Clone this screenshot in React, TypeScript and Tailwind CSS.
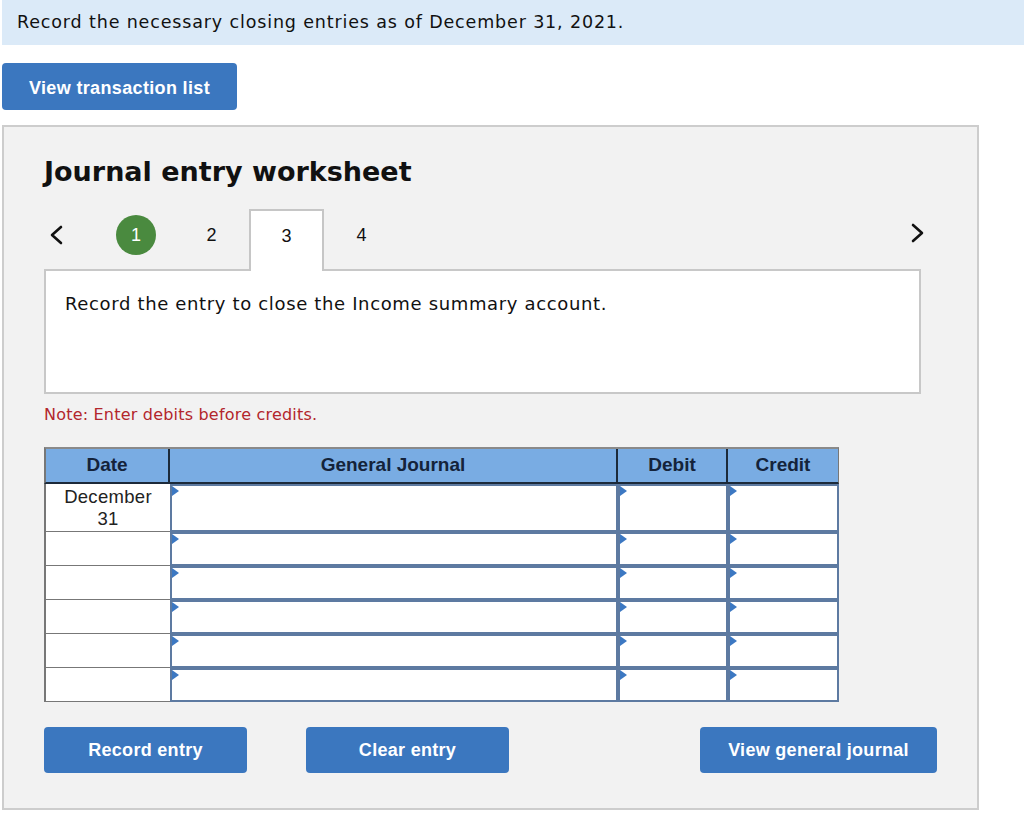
const rows = [48, 34, 34, 34, 34, 34];

function Chevron({ dir }: { dir: "left" | "right" }) {
  return (
    <svg width="16" height="22" viewBox="0 0 16 22" fill="none">
      <polyline
        points={dir === "left" ? "13,3 4,11 13,19" : "3,3 12,11 3,19"}
        stroke="#111"
        strokeWidth="2.6"
        strokeLinecap="round"
        strokeLinejoin="round"
      />
    </svg>
  );
}

function InputCell({ width }: { width: string }) {
  return (
    <div className={`${width} relative h-full border-2 border-[#5d7aa1] bg-white`}>
      <span className="absolute left-0 top-0 h-0 w-0 border-y-[5px] border-l-[7px] border-y-transparent border-l-[#3c78c2]" />
    </div>
  );
}

export default function App() {
  return (
    <div className="h-[824px] w-[1024px] overflow-hidden bg-white font-['DejaVu_Sans',sans-serif] text-[#111]">
      <div className="ml-[2px] flex h-[45px] items-center bg-[#dbeaf8] px-[15px] text-[17.5px] tracking-[0.85px]">
        Record the necessary closing entries as of December 31, 2021.
      </div>

      <button className="ml-[2px] mt-[18px] flex h-[47px] w-[235px] items-center justify-center rounded-[4px] bg-[#3b77bf] pt-[3px] font-['Liberation_Sans',sans-serif] text-[18px] font-bold tracking-[0.35px] text-white">
        View transaction list
      </button>

      <div className="ml-[2px] mt-[15px] box-border h-[685px] w-[977px] border-2 border-[#cdcdcd] bg-[#f2f2f2] pl-[40px]">
        <h1 className="mt-[30px] text-[27px] font-bold leading-[30px]">Journal entry worksheet</h1>

        <div className="mt-[22px] flex h-[60px] w-[893px] items-start font-['Liberation_Sans',sans-serif] text-[18px]">
          <div className="flex h-[52px] w-[54px] items-center pl-[4px]">
            <Chevron dir="left" />
          </div>
          <div className="flex w-[76px] justify-center pt-[6px]">
            <div className="flex h-[40px] w-[40px] items-center justify-center rounded-full bg-[#4a8a3f] text-white">1</div>
          </div>
          <div className="flex h-[46px] w-[75px] items-center justify-center pt-[6px]">2</div>
          <div className="relative z-10 box-border h-[62px] w-[75px] border-2 border-b-0 border-[#c6c6c6] bg-white">
            <div className="flex h-[46px] items-center justify-center pt-[4px]">3</div>
          </div>
          <div className="flex h-[46px] w-[75px] items-center justify-center pt-[6px]">4</div>
          <div className="ml-auto flex h-[48px] w-[27px] items-center">
            <Chevron dir="right" />
          </div>
        </div>

        <div className="box-border h-[125px] w-[877px] border-2 border-[#c8c8c8] bg-white px-[19px] pt-[20px] text-[18px] leading-[26px] tracking-[0.65px]">
          Record the entry to close the Income summary account.
        </div>

        <p className="mt-[11px] text-[16px] leading-[20px] tracking-[0.2px] text-[#b3262c]">Note: Enter debits before credits.</p>

        <div className="mt-[22px] w-[795px] font-['Liberation_Sans',sans-serif] text-[19px]">
          <div className="box-border flex h-[37px] border-l-2 border-r border-t-2 border-b-2 border-l-[#777] border-r-[#777] border-t-[#8a8a8a] border-b-[#1c2a3a] bg-[#79ace3] font-bold text-[#14233a]">
            <div className="flex w-[124px] items-center justify-center border-r-2 border-[#1c2a3a]">Date</div>
            <div className="flex w-[448px] items-center justify-center border-r-2 border-[#1c2a3a]">General Journal</div>
            <div className="flex w-[110px] items-center justify-center border-r-2 border-[#1c2a3a]">Debit</div>
            <div className="flex flex-1 items-center justify-center">Credit</div>
          </div>

          {rows.map((h, i) => (
            <div key={i} className="flex" style={{ height: h }}>
              <div className="box-border flex w-[126px] items-center justify-center border-b border-l-2 border-[#777] bg-white text-center text-[18.5px] leading-[22px] tracking-[0.3px] text-[#222]">
                {i === 0 ? (
                  <span>
                    December
                    <br />
                    31
                  </span>
                ) : null}
              </div>
              <InputCell width="w-[448px]" />
              <InputCell width="w-[110px]" />
              <InputCell width="w-[111px]" />
            </div>
          ))}
        </div>

        <div className="mt-[25px] flex w-[893px] font-['Liberation_Sans',sans-serif] text-[18px] font-bold tracking-[0.3px] text-white">
          <button className="h-[46px] w-[203px] rounded-[4px] bg-[#3b77bf]">Record entry</button>
          <button className="ml-[59px] h-[46px] w-[203px] rounded-[4px] bg-[#3b77bf]">Clear entry</button>
          <button className="ml-auto h-[46px] w-[237px] rounded-[4px] bg-[#3b77bf]">View general journal</button>
        </div>
      </div>
    </div>
  );
}
